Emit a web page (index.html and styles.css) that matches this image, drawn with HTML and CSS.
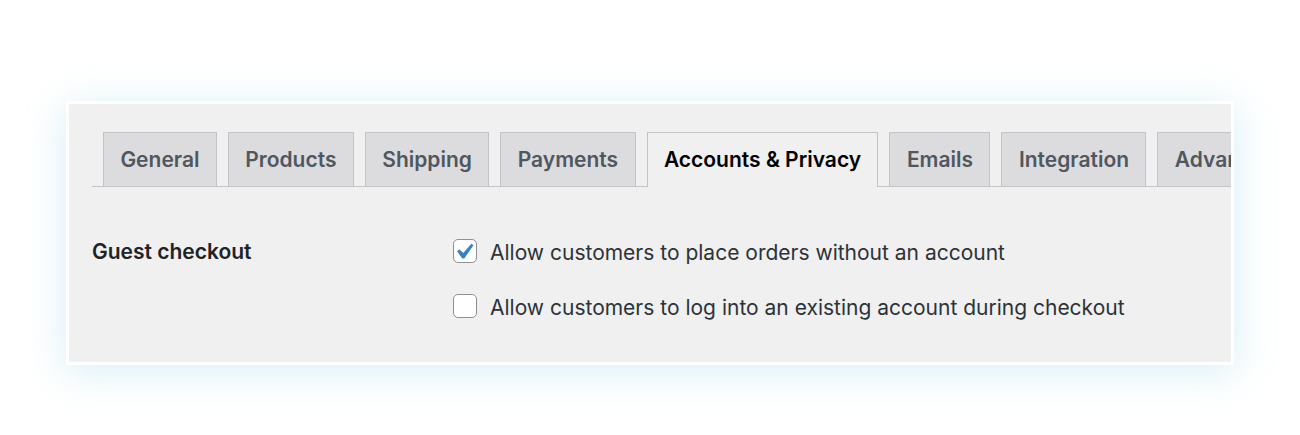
FILE: index.html
```html
<!DOCTYPE html>
<html lang="en">
<head>
<meta charset="utf-8">
<title>Accounts &amp; Privacy settings</title>
<link rel="stylesheet" href="styles.css">
</head>
<body>
<div class="stage">
  <div class="card">
    <div class="panel">
      <nav class="tabs">
        <a class="tab">General</a>
        <a class="tab">Products</a>
        <a class="tab">Shipping</a>
        <a class="tab">Payments</a>
        <a class="tab active">Accounts &amp; Privacy</a>
        <a class="tab">Emails</a>
        <a class="tab">Integration</a>
        <a class="tab">Advanced</a>
      </nav>
      <div class="form">
        <div class="label">Guest checkout</div>
        <div class="options">
          <label class="opt">
            <span class="cb">
              <svg class="check" viewBox="0 0 20 20" aria-hidden="true"><path d="M14.83 4.89l1.34.94-5.81 8.38H9.02L5.78 9.670l1.34-1.25 2.57 2.4z"/></svg>
            </span>
            <span class="opt-text">Allow customers to place orders without an account</span>
          </label>
          <label class="opt">
            <span class="cb"></span>
            <span class="opt-text">Allow customers to log into an existing account during checkout</span>
          </label>
        </div>
      </div>
    </div>
  </div>
</div>
</body>
</html>
```

FILE: styles.css
```css
html, body {
  margin: 0;
  padding: 0;
  background: #ffffff;
}

body {
  font-family: Inter, "Noto Sans", "Liberation Sans", sans-serif;
  -webkit-font-smoothing: antialiased;
}

.stage {
  box-sizing: border-box;
  min-height: 435px;
  padding: 101px 0 70px 66px;
}

.card {
  width: 1162px;
  height: 258px;
  border: 3px solid #ffffff;
  box-shadow: 0 6px 38px rgba(120, 200, 225, 0.30);
  background: #f0f0f1;
  overflow: hidden;
}

.panel {
  padding: 28px 0 0 23px;
}

.tabs {
  display: flex;
  flex-wrap: nowrap;
  white-space: nowrap;
  padding-left: 11px;
  border-bottom: 1px solid #c3c4c7;
  height: 54px;
}

.tab {
  flex: none;
  box-sizing: border-box;
  height: 54px;
  margin-right: 11px;
  padding: 0 16.4px;
  border: 1px solid #c3c4c7;
  border-bottom: none;
  background: #dcdcde;
  color: #50575e;
  font-size: 21px;
  font-weight: 600;
  line-height: 54px;
}

.tab.active {
  background: #f0f0f1;
  color: #000000;
  height: 55px;
  margin-bottom: -1px;
}

.form {
  display: grid;
  grid-template-columns: 361px 1fr;
  margin-top: 46px;
}

.label {
  color: #1d2327;
  font-size: 21px;
  font-weight: 600;
  line-height: 30px;
  padding-top: 4px;
}

.options {
  display: flex;
  flex-direction: column;
  gap: 25px;
  padding-top: 3px;
}

.opt {
  display: flex;
  align-items: center;
  gap: 13px;
  height: 30px;
  color: #2c3338;
  font-size: 21px;
  line-height: 30px;
}

.opt-text {
  padding-top: 4px;
}

.cb {
  flex: none;
  box-sizing: border-box;
  width: 24px;
  height: 24px;
  border: 1px solid #8c8f94;
  border-radius: 5px;
  background: #ffffff;
  overflow: visible;
}

.check {
  display: block;
  width: 31.5px;
  height: 31.5px;
  margin: -4.5px 0 0 -6px;
  fill: #3582c4;
}
```
